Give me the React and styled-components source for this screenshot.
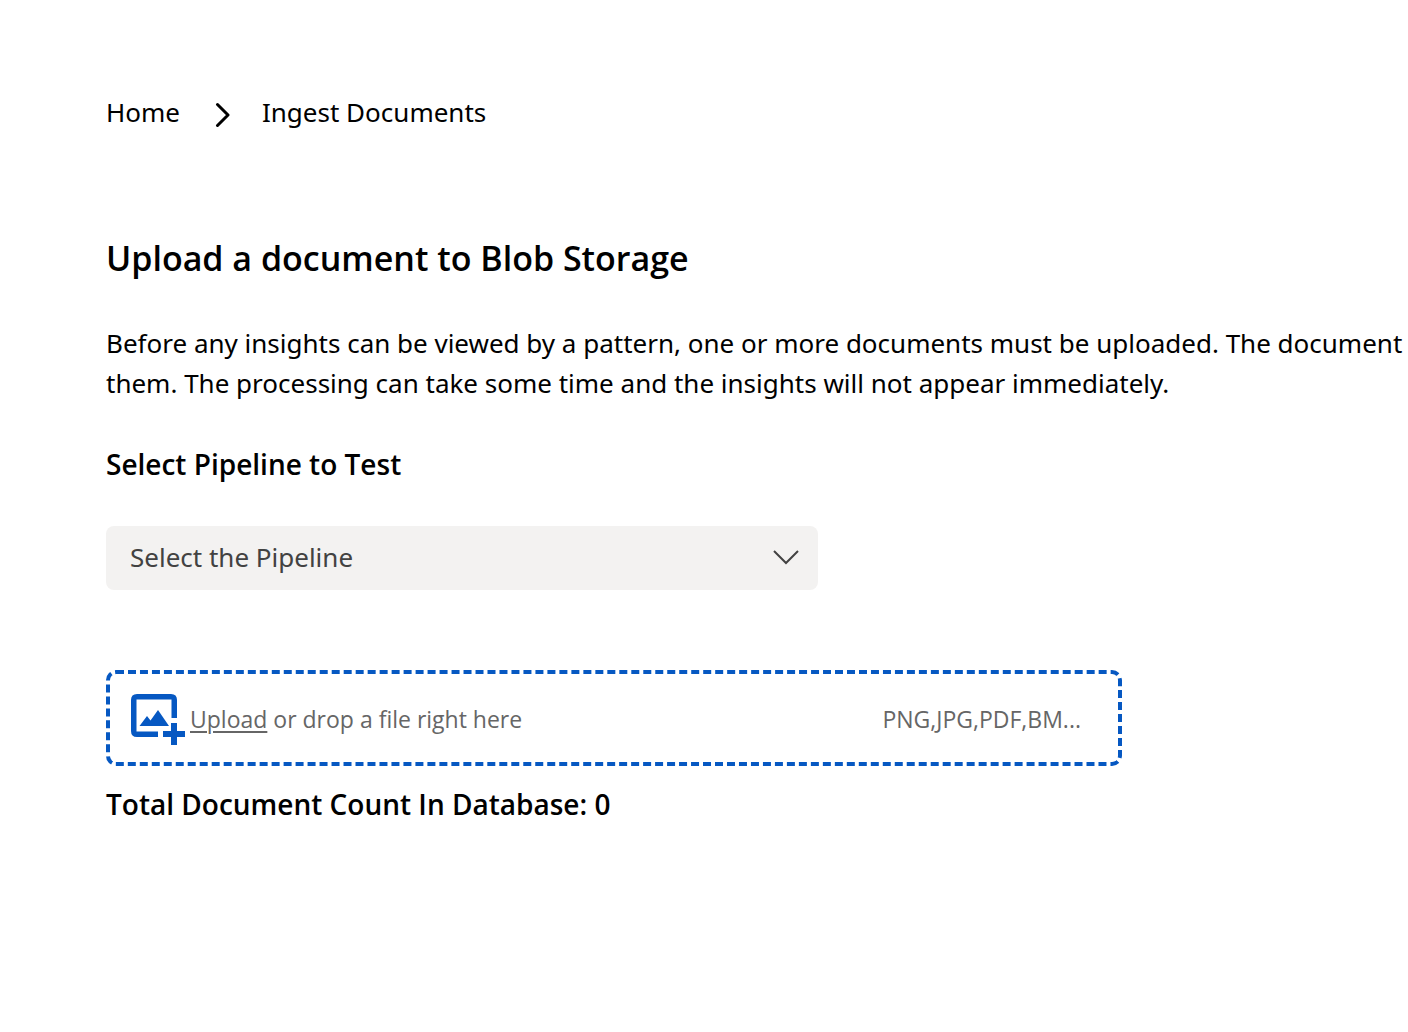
import React from "react";
import styled, { createGlobalStyle } from "styled-components";

const GlobalStyle = createGlobalStyle`
  body {
    margin: 0;
    background: #ffffff;
    color: #000000;
    font-family: "Segoe UI", "Noto Sans", sans-serif;
    font-size: 26px;
    line-height: 40px;
  }
  *, *::before, *::after { box-sizing: border-box; }
`;

const Page = styled.main`
  padding: 92px 0 40px 106px;
  overflow: hidden;
`;

const Breadcrumb = styled.nav`
  display: flex;
  align-items: center;
  gap: 32px;
  svg { flex: none; margin-top: 6px; }
`;

const Crumb = styled.a`
  color: inherit;
  text-decoration: none;
`;

const Title = styled.h1`
  margin: 102px 0 0;
  font-family: "Segoe UI", "Open Sans", sans-serif;
  font-size: 34px;
  line-height: 48px;
  font-weight: 600;
`;

const Intro = styled.p`
  margin: 41px 0 0;
  white-space: nowrap;
`;

const SubTitle = styled.h2`
  margin: 0;
  font-family: "Segoe UI", "Open Sans", sans-serif;
  font-size: 28px;
  line-height: 40px;
  font-weight: 600;
`;

const PipelineField = styled.div`
  margin-top: 41px;
`;

const SelectWrap = styled.div`
  display: grid;
  align-items: center;
  width: 100%;
  max-width: 712px;
  margin-top: 41px;
  > * { grid-area: 1 / 1; }
  svg { justify-self: end; margin: 0 18px 2px 0; pointer-events: none; }
`;

const Select = styled.select`
  appearance: none;
  width: 100%;
  height: 64px;
  padding: 0 64px 2px 24px;
  border: 0;
  border-radius: 8px;
  background: #f3f2f1;
  color: #424242;
  font: inherit;
`;

const DropZone = styled.div`
  display: flex;
  align-items: center;
  width: calc(100% - 40px);
  max-width: 1016px;
  height: 96px;
  margin: 80px 0 18px;
  padding: 2px 37px 0 20px;
  border: 4px dashed #0658c2;
  border-radius: 10px;
  color: #666666;
  font-family: "Segoe UI", "Open Sans", sans-serif;
  font-size: 23px;
  line-height: 32px;
  svg { flex: none; }
`;

const UploadText = styled.span`
  flex: 1;
  margin-left: 4px;
`;

const UploadButton = styled.button`
  padding: 0;
  border: 0;
  background: none;
  color: inherit;
  font: inherit;
  text-decoration: underline;
  text-decoration-thickness: 2px;
  text-underline-offset: 3px;
  cursor: pointer;
`;

const ChevronRight = () => (
  <svg width="18" height="26" viewBox="0 0 18 26" fill="none" stroke="#000" strokeWidth="3" aria-hidden="true">
    <path d="M5.500 2.500L16 13L5.500 23.500" strokeLinecap="round" strokeLinejoin="round" />
  </svg>
);

const ChevronDown = () => (
  <svg width="28" height="16" viewBox="0 0 28 16" fill="none" stroke="#424242" strokeWidth="2" aria-hidden="true">
    <path d="M2 2l12 12L26 2" />
  </svg>
);

const AddImage = () => (
  <svg width="56" height="52" viewBox="0 0 56 52" fill="#0658c2" aria-hidden="true">
    <path d="M7 1H41Q47 1 47 7V25H41.500V6.500H6.500V38.500H28V44H7Q1 44 1 38V7Q1 1 7 1Z" />
    <path d="M9.500 33L17 23L20.500 27.500L28 17L39 33Z" />
    <path d="M41 30H47V38H55V44H47V52H41V44H33V38H41Z" />
  </svg>
);

export default function App() {
  return (
    <>
      <GlobalStyle />
      <Page>
        <Breadcrumb aria-label="Breadcrumb">
          <Crumb href="#home">Home</Crumb>
          <ChevronRight />
          <Crumb href="#ingest" aria-current="page">Ingest Documents</Crumb>
        </Breadcrumb>
        <Title>Upload a document to Blob Storage</Title>
        <Intro>
          Before any insights can be viewed by a pattern, one or more documents must be uploaded. The document
          <br />
          them. The processing can take some time and the insights will not appear immediately.
        </Intro>
        <PipelineField>
          <SubTitle as="label" htmlFor="pipeline">Select Pipeline to Test</SubTitle>
          <SelectWrap>
            <Select id="pipeline" defaultValue="">
              <option value="">Select the Pipeline</option>
            </Select>
            <ChevronDown />
          </SelectWrap>
        </PipelineField>
        <DropZone>
          <AddImage />
          <UploadText>
            <UploadButton type="button">Upload</UploadButton> or drop a file right here
          </UploadText>
          <span>PNG,JPG,PDF,BM...</span>
        </DropZone>
        <SubTitle>Total Document Count In Database: 0</SubTitle>
      </Page>
    </>
  );
}
